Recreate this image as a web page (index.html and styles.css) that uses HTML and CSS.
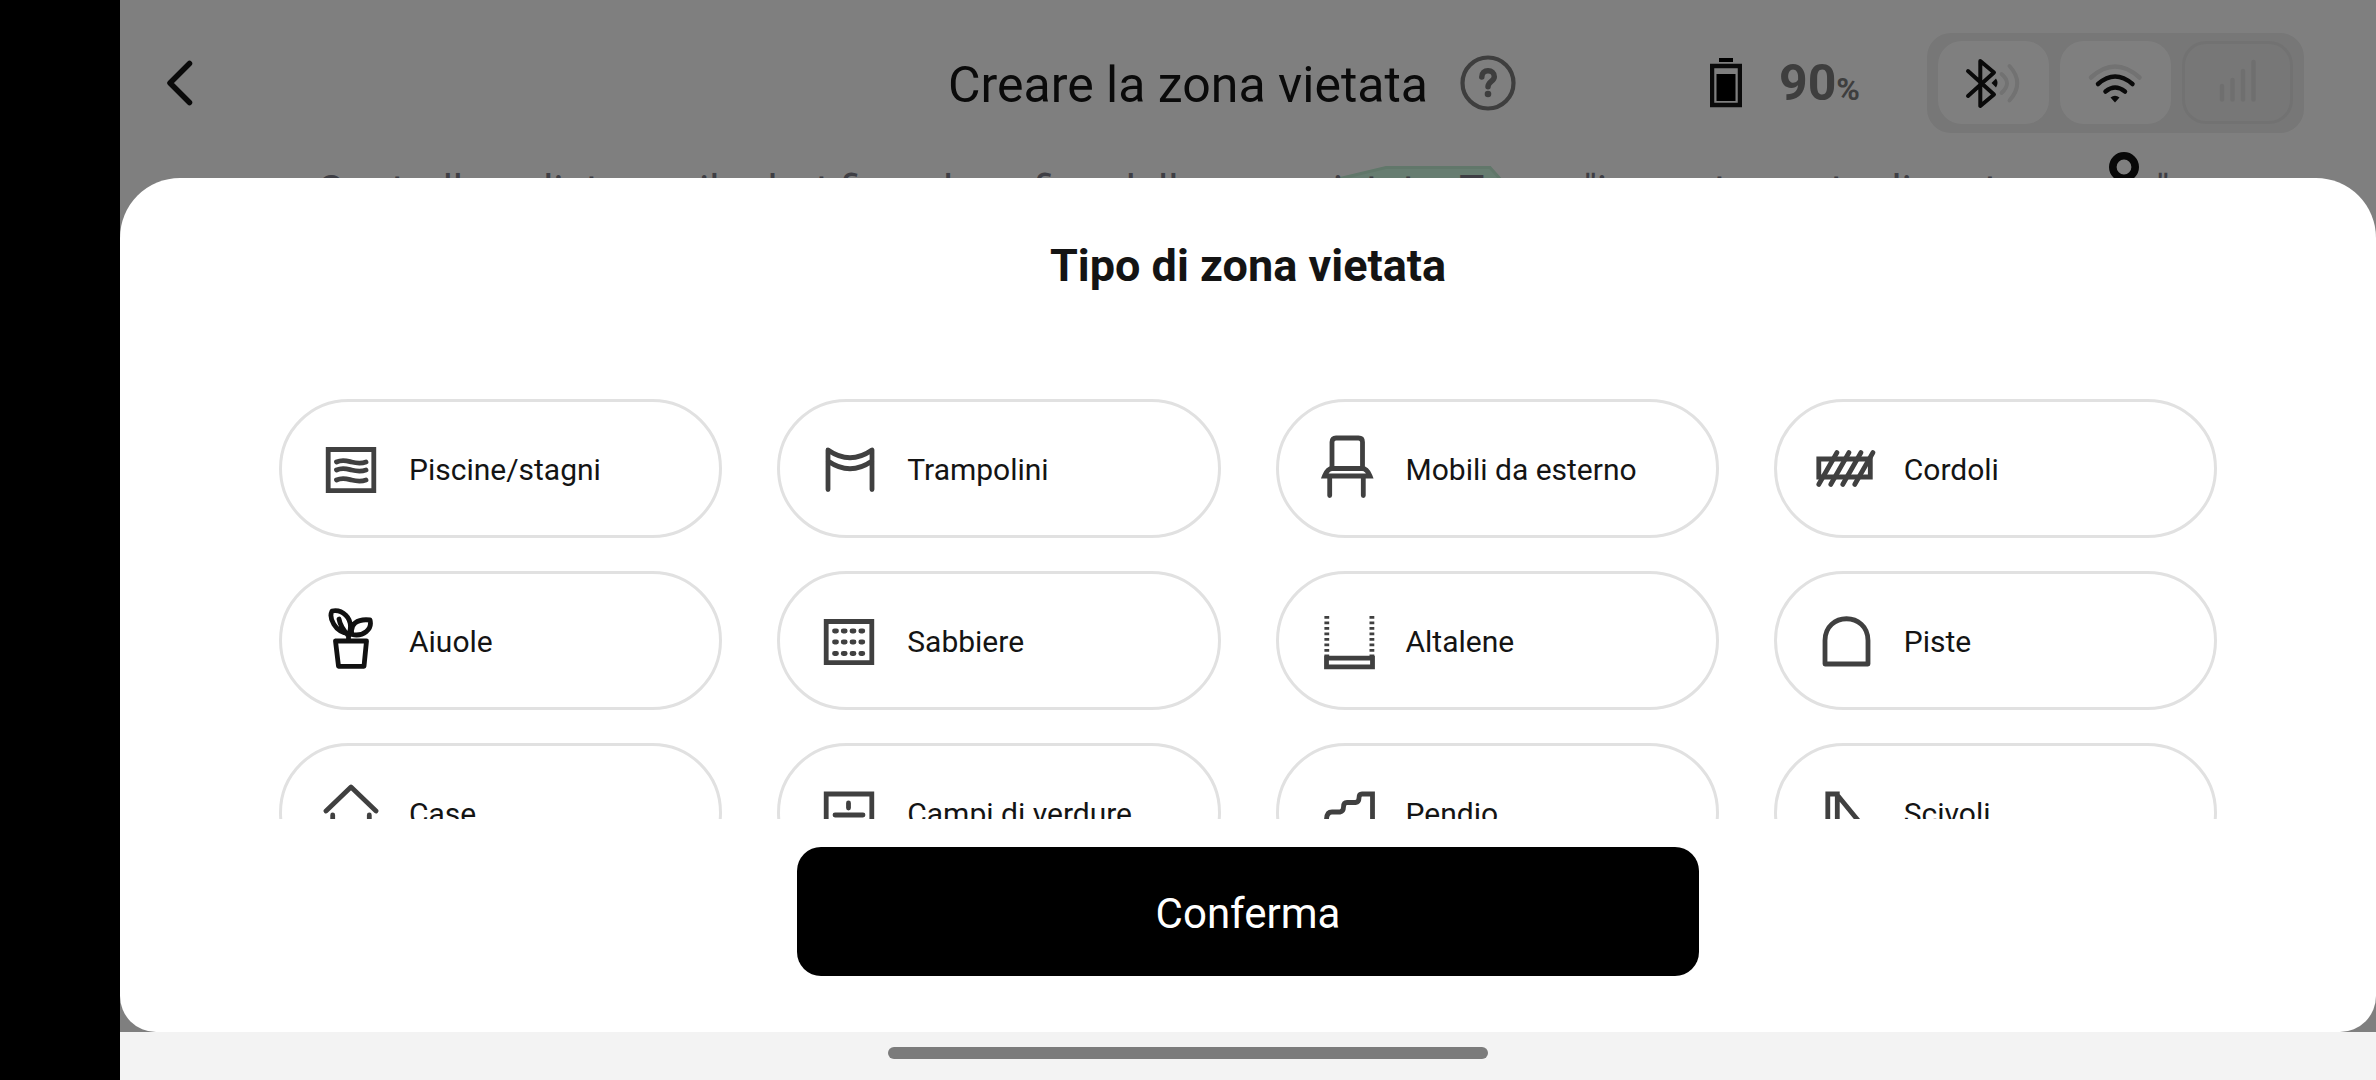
FILE: index.html
```html
<!DOCTYPE html>
<html lang="it">
<head>
<meta charset="utf-8">
<meta name="viewport" content="width=device-width, initial-scale=1">
<title>Creare la zona vietata</title>
<link rel="stylesheet" href="styles.css">
</head>
<body>
<div class="screen">
  <div class="app">
    <header class="topbar">
      <button class="icon-button back" type="button" aria-label="Indietro">
        <svg width="40" height="56" viewBox="0 0 40 56"><path d="M29.500 8.500 10 28l19.500 19.500" fill="none" stroke="currentColor" stroke-width="5.500" stroke-linecap="round" stroke-linejoin="round"/></svg>
      </button>
      <div class="topbar-title">
        <h1>Creare la zona vietata</h1>
        <button class="icon-button help" type="button" aria-label="Aiuto">
          <svg width="56" height="56" viewBox="0 0 56 56" fill="none" stroke="currentColor" stroke-linecap="round"><circle cx="28" cy="28" r="25.500" stroke-width="4.200"/><path d="M21.800 22c0-4 2.800-6.300 6.200-6.300s6.300 2.300 6.300 6c0 4.500-6.300 5-6.300 10" stroke-width="5.500"/><circle cx="28" cy="39" r="3.300" fill="currentColor" stroke="none"/></svg>
        </button>
      </div>
      <div class="status">
        <svg width="32" height="50" viewBox="0 0 32 50"><path d="M9 0h14v4H9z"/><path d="M2 8h28v39H2z" fill="none" stroke="#141414" stroke-width="4.500"/><path d="M6.500 16h19v27h-19z"/></svg>
        <p class="battery">90<span class="percent">%</span></p>
        <div class="links">
          <div class="link">
            <svg viewBox="0 0 111 83" fill="none" stroke-width="4" stroke-linecap="round" stroke-linejoin="round"><path d="M30 30 56 53.500 42.300 65V20L56 31.500 30 55" stroke="#141414"/><path d="M53.500 42l4.500-4.500q3 4.500 0 9z" fill="#141414"/><path d="M63.500 33q11 9 0 19M71.500 25q15.500 17 0 34.500" stroke="#e4e4e4"/></svg>
          </div>
          <div class="link">
            <svg viewBox="0 0 111 83" fill="none" stroke-width="4.500" stroke-linecap="round"><path d="M31 36.500q24-22 48.500 0" stroke="#e4e4e4"/><path d="M38 43q17-15 34.500 0M45.500 50.500q9.500-8 19.500 0" stroke="#141414"/><path d="M50.500 56.500q4.500-3.500 9 0L55 61.500z" fill="#141414"/></svg>
          </div>
          <div class="link link-off">
            <svg viewBox="0 0 111 83" fill="none" stroke="#dfdfdf" stroke-width="4.500" stroke-linecap="round"><path d="M40 45v13.500M50.500 39v19.500M61 30v28.500M71.500 21v37.500"/></svg>
          </div>
        </div>
      </div>
    </header>
    <svg class="map-zone" viewBox="0 0 200 60"><path d="M2 14 50 2.500h104L182 34v26H2z" fill="#cefae2" stroke="#c2efd4" stroke-width="3"/></svg>
    <p class="hint">Controlla a distanza il robot fino al confine della zona vietata. Tocca "imposta punto di partenza ora"</p>
    <svg class="map-pin" viewBox="0 0 30 30"><circle cx="15" cy="15" r="11.200" fill="none" stroke="#101010" stroke-width="7.600"/></svg>

    <div class="backdrop">
      <section class="sheet" role="dialog" aria-labelledby="sheet-title">
        <h2 id="sheet-title">Tipo di zona vietata</h2>
        <div class="types">
          <button class="type" type="button">
            <svg viewBox="0 0 66 67"><path d="M10.200 14.500h45.600v41.200H10.200z"/><path class="round" d="M18.500 27c6-3 11-1 15 0s9 2 14.500 0M18.500 35c6-3 11-1 15 0s9 2 14.500 0M18.500 45c6-3 11-1 15 0s9 2 14.500 0"/></svg>
            <span>Piscine/stagni</span>
          </button>
          <button class="type" type="button">
            <svg viewBox="0 0 66 67"><path class="round" d="M12 54.500V15q22 15.500 44 0v39.500M12 26q22 15.500 44 0"/></svg>
            <span>Trampolini</span>
          </button>
          <button class="type" type="button">
            <svg viewBox="0 0 66 67"><path class="round" d="M17 32V7q0-4 4-4h22.500q4 0 4 4v25M14.700 43v17.500M48.300 43v17.500"/><path d="M9.500 41q3-7.500 8-7.500h29.500q5 0 8 7.500z"/></svg>
            <span>Mobili da esterno</span>
          </button>
          <button class="type" type="button">
            <svg viewBox="0 0 66 67"><path d="M5.800 24h51.500v18H5.800z"/><path class="round" d="M5.700 49.500 24 17.500M17.700 49.500 36 17.500M29.700 49.500 48 17.500M41.700 49.500 60 17.500"/></svg>
            <span>Cordoli</span>
          </button>
          <button class="type" type="button">
            <svg class="ink" viewBox="0 0 66 67"><path class="round" d="M17.500 34h31L46 59.300H20.500zM30.500 33v-6M30 26.500C17 25 10.500 11 14 4c9-2 22 6 17.500 22M21 12c1 6 5 12 9.500 17M34 27.500c-2.500-10 5-16 18-14.500 2.500 9-6.500 17-18 14.500z"/></svg>
            <span>Aiuole</span>
          </button>
          <button class="type" type="button">
            <svg viewBox="0 0 66 67"><path d="M10.200 14.500h45.600v41.200H10.200z"/><path class="round" d="M18.500 24h2M27.200 24h2M36 24h2M44.800 24h2M18.500 35h2M27.200 35h2M36 35h2M44.800 35h2M18.500 46.500h2M27.200 46.500h2M36 46.500h2M44.800 46.500h2"/></svg>
            <span>Sabbiere</span>
          </button>
          <button class="type" type="button">
            <svg viewBox="0 0 66 67"><path d="M11.500 51.200h46v8.600h-46z"/><path d="M11.800 9v40M56.900 9v40" stroke-dasharray="2.700 2.800"/></svg>
            <span>Altalene</span>
          </button>
          <button class="type" type="button">
            <svg viewBox="0 0 66 67"><path class="round" d="M12 57V33.500c0-29 43-29 43 0V57z"/></svg>
            <span>Piste</span>
          </button>
          <button class="type" type="button">
            <svg viewBox="0 0 66 67"><path class="round" d="M8 32 33 8l25 24M14.700 36v23h36.600V36"/></svg>
            <span>Case</span>
          </button>
          <button class="type" type="button">
            <svg viewBox="0 0 66 67"><path d="M10.200 15h45.600v41.200H10.200z"/><path class="round" d="M32.500 24v5M19 36h28M32.500 43v5"/></svg>
            <span>Campi di verdure</span>
          </button>
          <button class="type" type="button">
            <svg viewBox="0 0 66 67"><path d="M57.500 58V15H47q-3 0-3 4t-3.500 4.500H32q-3.500 0-3.500 4.500T25 33h-8q-5.500 0-5.500 8V58z"/></svg>
            <span>Pendio</span>
          </button>
          <button class="type" type="button">
            <svg viewBox="0 0 66 67"><path d="M14.800 60V15h9.500V60M24.300 16 57 56"/></svg>
            <span>Scivoli</span>
          </button>
        </div>
        <button class="confirm" type="button">Conferma</button>
      </section>
    </div>
  </div>
  <div class="system-nav"><span class="handle"></span></div>
</div>
</body>
</html>
```
FILE: styles.css
```css
* {
  box-sizing: border-box;
}

body {
  margin: 0;
  background: #000;
  color: #141414;
  font-family: Roboto, "Liberation Sans", sans-serif;
}

h1,
h2,
p {
  margin: 0;
}

button {
  padding: 0;
  border: 0;
  background: none;
  color: inherit;
  font: inherit;
  cursor: pointer;
}

svg {
  display: block;
  flex: none;
}

.screen {
  display: flex;
  flex-direction: column;
  height: 100vh;
  padding-left: 120px;
}

.app {
  position: relative;
  flex: 1;
  min-height: 0;
  overflow: hidden;
  background: #fff;
}

.topbar {
  display: grid;
  grid-template-columns: 1fr auto 1fr;
  align-items: center;
  height: 166px;
  padding: 0 72px 0 40px;
}

.back {
  justify-self: start;
}

.topbar-title {
  display: flex;
  align-items: center;
  gap: 32px;
}

h1 {
  padding-top: 4px;
  font-size: 50px;
  font-weight: 400;
  line-height: 60px;
}

.help {
  color: #7c7c7c;
}

.status {
  display: flex;
  align-items: center;
  justify-self: end;
}

.battery {
  margin: 0 67px 0 37px;
  padding-top: 6px;
  color: #7c7c7c;
  font-size: 50px;
  font-weight: 700;
  line-height: 60px;
}

.percent {
  font-size: 32px;
  font-weight: 700;
}

.links {
  display: flex;
  gap: 11px;
  padding: 8px 11px 9px;
  border-radius: 24px;
  background: #eee;
}

.link {
  width: 111px;
  height: 83px;
  border-radius: 24px;
  background: #fff;
}

.link-off {
  background: none;
  box-shadow: inset 0 0 0 3px #e4e4e4;
}

.hint {
  position: relative;
  padding-right: 10px;
  color: #7c7c88;
  font-size: 42px;
  line-height: 50px;
  text-align: center;
  white-space: nowrap;
}

/* Map shapes lie on the free canvas behind the sheet */
.map-zone {
  position: absolute;
  top: 165px;
  left: 1216px;
  width: 200px;
}

.map-pin {
  position: absolute;
  top: 152px;
  right: 237px;
  width: 30px;
}

.backdrop {
  position: absolute;
  inset: 0;
  display: flex;
  padding-top: 178px;
  background: rgba(0, 0, 0, 0.5);
}

.sheet {
  display: flex;
  flex: 1;
  flex-direction: column;
  align-items: center;
  min-width: 0;
  padding: 58px 0 56px;
  border-radius: 60px 60px 36px 36px;
  background: #fff;
}

h2 {
  font-size: 45px;
  font-weight: 700;
  line-height: 60px;
}

.types {
  display: grid;
  flex: 1;
  grid-template-columns: repeat(4, 1fr);
  align-content: start;
  gap: 33px 55px;
  width: 100%;
  min-height: 0;
  margin: 103px 0 28px;
  padding: 0 159px;
  overflow-y: auto;
  scrollbar-width: none;
}

.type {
  display: flex;
  align-items: center;
  gap: 25px;
  height: 139px;
  padding: 0 36px;
  border: 3px solid #e1e1e1;
  border-radius: 70px;
  font-size: 30px;
  line-height: 36px;
  text-align: left;
}

.type span {
  padding-top: 2px;
}

.type svg {
  width: 66px;
  height: 67px;
  fill: none;
  stroke: #404040;
  stroke-width: 4.8px;
}

.type .ink {
  stroke: #111;
}

.round {
  stroke-linecap: round;
  stroke-linejoin: round;
}

.confirm {
  flex: none;
  width: 40%;
  height: 129px;
  padding-top: 4px;
  border-radius: 24px;
  background: #000;
  color: #fff;
  font-size: 42px;
}

.system-nav {
  display: flex;
  justify-content: center;
  height: 48px;
  padding: 15px 120px 0 0;
  background: #f3f3f3;
}

.handle {
  width: 600px;
  height: 12px;
  border-radius: 6px;
  background: #7b7b7b;
}
```
